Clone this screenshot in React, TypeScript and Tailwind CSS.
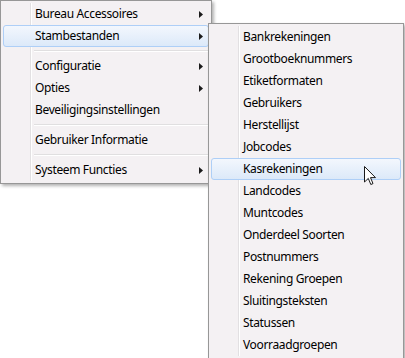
import React from 'react';

type Item = { label: string; sub?: boolean; hover?: boolean } | 'sep';

const mainItems: Item[] = [
  { label: 'Bureau Accessoires', sub: true },
  { label: 'Stambestanden', sub: true, hover: true },
  'sep',
  { label: 'Configuratie', sub: true },
  { label: 'Opties', sub: true },
  { label: 'Beveiligingsinstellingen' },
  'sep',
  { label: 'Gebruiker Informatie' },
  'sep',
  { label: 'Systeem Functies', sub: true },
];

const subItems: Item[] = [
  { label: 'Bankrekeningen' },
  { label: 'Grootboeknummers' },
  { label: 'Etiketformaten' },
  { label: 'Gebruikers' },
  { label: 'Herstellijst' },
  { label: 'Jobcodes' },
  { label: 'Kasrekeningen', hover: true },
  { label: 'Landcodes' },
  { label: 'Muntcodes' },
  { label: 'Onderdeel Soorten' },
  { label: 'Postnummers' },
  { label: 'Rekening Groepen' },
  { label: 'Sluitingsteksten' },
  { label: 'Statussen' },
  { label: 'Voorraadgroepen' },
];

const Arrow = () => (
  <svg width="4" height="7" viewBox="0 0 4 7" className="shrink-0">
    <path d="M0 0 L4 3.5 L0 7 Z" fill="#1a1a1a" />
  </svg>
);

const Menu: React.FC<{ items: Item[]; className: string }> = ({ items, className }) => (
  <div
    className={`absolute border border-[#979797] bg-[#f4f1f3] p-[2px] shadow-[2px_2px_3px_rgba(0,0,0,0.3)] ${className}`}
  >
    {/* gutter lines */}
    <div className="pointer-events-none absolute top-[2px] bottom-[2px] left-[29px] w-px bg-[#e2e0e2]" />
    <div className="pointer-events-none absolute top-[2px] bottom-[2px] left-[30px] w-px bg-white" />
    <div className="relative flex flex-col">
      {items.map((it, i) =>
        it === 'sep' ? (
          <div key={i} className="flex h-[8px] flex-col justify-center pl-[31px]">
            <div className="h-px bg-[#e0dfe0]" />
            <div className="h-px bg-white" />
          </div>
        ) : (
          <div
            key={i}
            className={`flex h-[22px] items-center rounded-[3px] border pr-[5px] pl-[31px] ${
              it.hover
                ? 'border-[#aecff7] bg-gradient-to-b from-[#f3f7fd] to-[#dce9f9]'
                : 'border-transparent'
            }`}
          >
            <span className="flex-1 text-[12px] tracking-[-0.35px] text-black">{it.label}</span>
            {it.sub && <Arrow />}
          </div>
        )
      )}
    </div>
  </div>
);

const Cursor = () => (
  <svg width="12" height="20" viewBox="0 0 12 20" className="absolute left-[364px] top-[166px]">
    <path
      d="M0.5 0.5 L0.5 16 L4.3 12.4 L6.8 18.5 L9 17.6 L6.5 11.6 L11.5 11.6 Z"
      fill="#ffffff"
      stroke="#1a1a1a"
      strokeWidth="1"
      strokeLinejoin="miter"
    />
  </svg>
);

export default function App() {
  return (
    <div
      className="relative h-[358px] w-[405px] overflow-hidden bg-white"
      style={{ fontFamily: '"Noto Sans", "Open Sans", sans-serif' }}
    >
      <Menu items={mainItems} className="left-0 top-0 w-[212px]" />
      <Menu items={subItems} className="left-[208px] top-[23px] w-[196px]" />
      <Cursor />
    </div>
  );
}
